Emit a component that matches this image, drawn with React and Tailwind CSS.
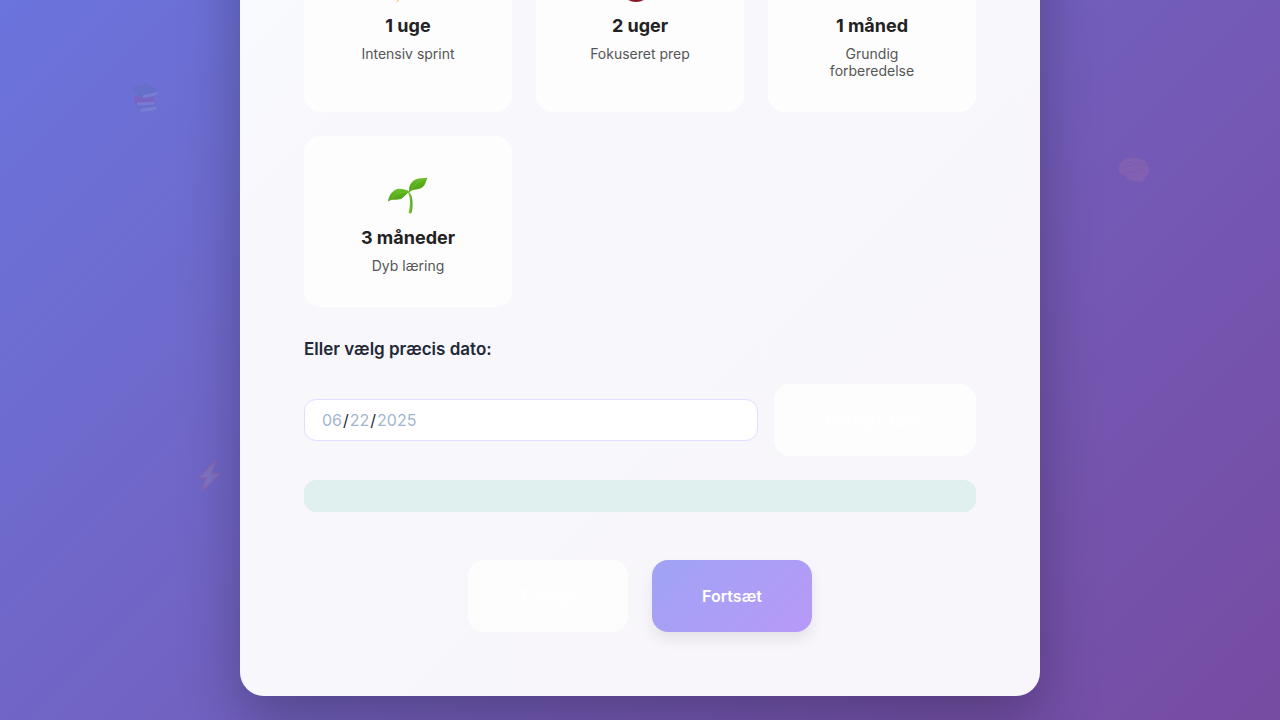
const SeedlingIcon = () => (
  <svg viewBox="0 0 40 48" className="h-12 w-10" aria-hidden="true">
    <defs>
      <linearGradient id="leaf" x1="0" y1="0" x2="0.3" y2="1">
        <stop offset="0" stopColor="#79c832" />
        <stop offset="0.5" stopColor="#58b01c" />
        <stop offset="1" stopColor="#5a9c1a" />
      </linearGradient>
      <linearGradient id="stem" x1="0" y1="0" x2="1" y2="0">
        <stop offset="0" stopColor="#94dd4a" />
        <stop offset="1" stopColor="#4f9d1d" />
      </linearGradient>
    </defs>
    <path d="M20.500 22.500C25 25 25.300 36 23.800 43.500C23 44.800 21.300 44.800 20.600 43.800C22.400 36 22.600 28 20 24Z" fill="url(#stem)" />
    <path d="M0 32.500C0.500 27.500 4 22 8.500 20.300C13 19 18 20.800 22 22.800C18.500 24 17.500 27.500 13.500 29.700C9 31.600 4 29.500 0 32.500Z" fill="url(#leaf)" />
    <path d="M21.500 23.500C20 18 22.800 12.500 28 10.200C32 8.800 36 9.500 39.500 8.800C37.500 12.800 37.500 17 33 19.300C28.500 21.300 24 20 21.500 23.500Z" fill="url(#leaf)" />
    <path d="M1.500 31C6 26 12 22.500 20.500 23M23 20.500C26 15.500 31 12.500 37 10.200" fill="none" stroke="#7cc63c" strokeWidth="0.6" />
  </svg>
);

const BoltIcon = () => (
  <svg viewBox="0 0 40 48" className="h-12 w-10" aria-hidden="true">
    <path d="M28 8 6 28h11L8 46l24-23H21Z" fill="#fdc04a" />
  </svg>
);

const TargetIcon = () => (
  <svg viewBox="0 0 40 48" className="h-12 w-10" aria-hidden="true">
    <circle cx="16" cy="29" r="16" fill="#8c1420" />
    <circle cx="16" cy="29" r="12" fill="#fff" />
    <circle cx="16" cy="29" r="8" fill="#c92a36" />
  </svg>
);

const CalendarIcon = () => (
  <svg viewBox="0 0 40 48" className="h-12 w-10" aria-hidden="true">
    <rect x="4" y="8" width="32" height="32" rx="4" fill="#eee" />
    <path d="M4 18v-6a4 4 0 0 1 4-4h24a4 4 0 0 1 4 4v6Z" fill="#e0453a" />
  </svg>
);

const BooksIcon = () => (
  <svg viewBox="0 0 30 30" className="h-8 w-8" aria-hidden="true">
    <path d="M4 21 22 19l3 6-1 2-15 2Z" fill="#4f74a8" />
    <path d="M9 26 24 24v3l-15 2Z" fill="#a9b4d4" />
    <path d="M3 14 20 12l3 7-1 3-16 1-3-4Z" fill="#a8407c" />
    <path d="M6 20.500 22 19.500v2.500L6 23Z" fill="#bcaccc" />
    <path d="M1 6 14 2 25 9v4L12 17 2 10Z" fill="#4d6c9c" />
    <path d="M11 13.500 25 10v3l-13.500 3.500Z" fill="#a9b4d4" />
  </svg>
);

const BrainIcon = () => (
  <svg viewBox="0 0 32 28" className="h-7 w-8" aria-hidden="true">
    <path d="M1 13C1 6 7 2 14 2c8-1 15 3 16.500 9 1 4 .5 7-2.500 9-1 4-4 7-8 5.500C15 26 9 24 8 19.500 4 19 1 17 1 13Z" fill="#d58aa8" />
    <path d="M3 12c4-4 7 0 11-3s8 0 15 0M7 18c4-4 8 0 12-3s6 0 10 0M9 6c3 2 5-2 8 1" fill="none" stroke="#b0648a" strokeWidth="1" />
  </svg>
);

const SparkIcon = () => (
  <svg viewBox="0 0 22 30" className="h-8 w-6" aria-hidden="true">
    <path d="M17 1 2 16.500h7L4 29 21 13h-8Z" fill="#9fa3c4" stroke="#e9694e" strokeWidth="1" />
  </svg>
);

const periods = [
  { title: "1 uge", note: "Intensiv sprint", Icon: BoltIcon },
  { title: "2 uger", note: "Fokuseret prep", Icon: TargetIcon },
  { title: "1 måned", note: "Grundig forberedelse", Icon: CalendarIcon },
  { title: "3 måneder", note: "Dyb læring", Icon: SeedlingIcon },
];

export default function App() {
  return (
    <main className="relative flex h-screen flex-col items-center justify-end overflow-hidden bg-linear-135 from-[#6a74dc] to-[#764ba2] pb-6 font-['Inter',sans-serif]">
      <div className="absolute top-[81px] left-[131px] opacity-20"><BooksIcon /></div>
      <div className="absolute top-[156px] right-[130px] opacity-15"><BrainIcon /></div>
      <div className="absolute top-[460px] left-[197px] opacity-25"><SparkIcon /></div>

      <section className="relative w-full max-w-[800px] shrink-0 rounded-3xl bg-linear-135 from-[#f8fcff] via-[#f8f7fc] via-25% to-[#f8f6fb] p-16 shadow-[0_24px_60px_rgba(0,0,0,0.28)]">
        <div className="grid grid-cols-3 gap-6">
          {periods.map(({ title, note, Icon }) => (
            <button
              key={title}
              type="button"
              className="flex flex-col items-center justify-start rounded-2xl border border-white/60 bg-[#fdfdfe] px-10 py-8 text-center"
            >
              <Icon />
              <span className="mt-2 text-lg leading-[26px] font-bold text-[#222222]">{title}</span>
              <span className="mt-1.5 text-sm leading-[17px] text-[#555555]">{note}</span>
            </button>
          ))}
        </div>

        <label htmlFor="exam-date" className="mt-8 block text-[17px] leading-[21px] font-semibold text-[#1f2937]">
          Eller vælg præcis dato:
        </label>
        <div className="mt-6 flex items-center gap-4">
          <input
            id="exam-date"
            type="date"
            defaultValue="2025-06-22"
            className="h-[42px] min-w-0 flex-1 rounded-xl border border-[#e0deff] bg-white px-4 text-base text-[#1f2937] [&::-webkit-calendar-picker-indicator]:opacity-0 [&::-webkit-datetime-edit-day-field]:text-[#a3b4cf] [&::-webkit-datetime-edit-month-field]:text-[#a3b4cf] [&::-webkit-datetime-edit-year-field]:text-[#a3b4cf]"
          />
          <button type="button" className="h-18 shrink-0 rounded-2xl bg-[#fdfdfe] px-13 text-base font-semibold text-white">
            Beregn dage
          </button>
        </div>

        <div role="status" className="mt-6 h-8 rounded-xl bg-[#e0f0ee]" />

        <div className="mt-12 flex justify-center gap-6">
          <button type="button" className="h-18 w-40 rounded-2xl bg-[#fdfdfe] text-base font-semibold text-white">
            Tilbage
          </button>
          <button
            type="button"
            className="h-18 w-40 rounded-2xl bg-linear-135 from-[#9fa3f5] to-[#b799f7] text-base font-semibold text-white shadow-[0_8px_14px_rgba(0,0,0,0.08)]"
          >
            Fortsæt
          </button>
        </div>
      </section>
    </main>
  );
}
